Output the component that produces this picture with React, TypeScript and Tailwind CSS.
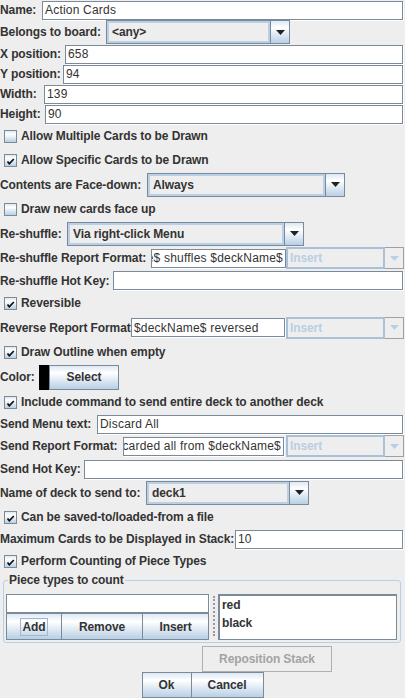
import React from 'react';

// Metal/Ocean look: shared button gradient + border colours
const grad = 'bg-[linear-gradient(to_bottom,#dde8f3_0%,#ffffff_30%,#b8cfe5_100%)]';

function Label({ text, w }: { text: string; w: string }) {
  return <span className={`shrink-0 whitespace-nowrap font-bold ${w}`}>{text}</span>;
}

function Field({ value = '', end = false, className = '' }: { value?: string; end?: boolean; className?: string }) {
  return (
    <div
      className={`h-[19px] min-w-0 bg-white border border-[#7a8a99] shadow-[1px_1px_0_#ffffff] flex items-center overflow-hidden px-[2px] tracking-[0.2px] ${end ? 'justify-end' : ''} ${className}`}
    >
      <span className="whitespace-nowrap">{value}</span>
    </div>
  );
}

function Arrow({ color }: { color: string }) {
  return (
    <svg width="9" height="5" viewBox="0 0 9 5">
      <path d="M0 0 H9 L4.5 5 Z" fill={color} />
    </svg>
  );
}

function Combo({ value, className = '' }: { value: string; className?: string }) {
  return (
    <div className={`h-[24px] shrink-0 flex border border-[#7a8a99] ${className}`}>
      <div className="flex-1 flex items-center pl-[3px] bg-[#eeeeee] border-2 border-[#b8cfe5] font-bold">{value}</div>
      <div className={`w-[19px] flex items-center justify-center border-l border-[#7a8a99] ${grad}`}>
        <Arrow color="#222222" />
      </div>
    </div>
  );
}

function DisabledCombo() {
  return (
    <div className="h-[22px] w-[118px] mr-[1px] shrink-0 flex">
      <div className="flex-1 flex items-center pl-[2px] border-2 border-[#a9c0d8] text-[#b8cfe5] font-bold">Insert</div>
      <div className="w-[19px] flex items-center justify-center border border-l-0 border-[#a0a0a0]">
        <Arrow color="#b8cfe5" />
      </div>
    </div>
  );
}

function Check({ checked = false, label }: { checked?: boolean; label: string }) {
  return (
    <div className="h-[24px] flex items-center pl-[4px] gap-[4px]">
      <div className={`w-[13px] h-[13px] border border-[#7a8a99] flex items-center justify-center ${grad}`}>
        {checked && (
          <svg width="9" height="9" viewBox="0 0 9 9">
            <path d="M1.5 5.5 L3.3 7.8 L7.8 3" stroke="#111111" strokeWidth="1.7" fill="none" />
          </svg>
        )}
      </div>
      <span className="font-bold whitespace-nowrap">{label}</span>
    </div>
  );
}

function Button({ text, className = '', focus = false }: { text: string; className?: string; focus?: boolean }) {
  return (
    <div className={`flex items-center justify-center border border-[#7a8a99] font-bold ${grad} ${className}`}>
      {focus ? <span className="border border-[#a3b8cc] px-[1px] leading-[16px]">{text}</span> : text}
    </div>
  );
}

export default function App() {
  return (
    <div className="w-[405px] h-[698px] overflow-hidden bg-[#eeeeee] text-[#333333] text-[12px] leading-[14px] tracking-[-0.1px] font-['Liberation_Sans',Arial,sans-serif] flex flex-col">
      <div className="h-[20px] flex items-center pr-[2px]">
        <Label text="Name:" w="w-[42px]" />
        <Field value="Action Cards" className="flex-1" />
      </div>
      <div className="h-[24px] flex items-center">
        <Label text="Belongs to board:" w="w-[106px]" />
        <Combo value="<any>" className="w-[184px]" />
      </div>
      <div className="h-[20px] flex items-center pr-[2px]">
        <Label text="X position:" w="w-[65px]" />
        <Field value="658" className="flex-1" />
      </div>
      <div className="h-[20px] flex items-center pr-[2px]">
        <Label text="Y position:" w="w-[63px]" />
        <Field value="94" className="flex-1" />
      </div>
      <div className="h-[20px] flex items-center pr-[2px]">
        <Label text="Width:" w="w-[44px]" />
        <Field value="139" className="flex-1" />
      </div>
      <div className="h-[20px] flex items-center pr-[2px]">
        <Label text="Height:" w="w-[45px]" />
        <Field value="90" className="flex-1" />
      </div>

      <Check label="Allow Multiple Cards to be Drawn" />
      <Check checked label="Allow Specific Cards to be Drawn" />

      <div className="h-[25px] flex items-center">
        <Label text="Contents are Face-down:" w="w-[147px]" />
        <Combo value="Always" className="w-[198px]" />
      </div>

      <Check label="Draw new cards face up" />

      <div className="h-[25px] flex items-center">
        <Label text="Re-shuffle:" w="w-[67px]" />
        <Combo value="Via right-click Menu" className="w-[237px]" />
      </div>
      <div className="h-[24px] flex items-center">
        <Label text="Re-shuffle Report Format:" w="w-[151px]" />
        <Field value="$playerSide$ shuffles $deckName$" end className="flex-1" />
        <DisabledCombo />
      </div>
      <div className="h-[21px] flex items-center pr-[2px]">
        <Label text="Re-shuffle Hot Key:" w="w-[113px]" />
        <Field className="flex-1" />
      </div>

      <Check checked label="Reversible" />

      <div className="h-[25px] flex items-center">
        <Label text="Reverse Report Format" w="w-[131px]" />
        <Field value="$deckName$ reversed" className="flex-1 mr-[1px]" />
        <DisabledCombo />
      </div>

      <Check checked label="Draw Outline when empty" />

      <div className="h-[26px] flex items-center">
        <Label text="Color:" w="w-[39px]" />
        <div className="w-[10px] h-[25px] bg-black" />
        <Button text="Select" className="w-[70px] h-[25px]" />
      </div>

      <Check checked label="Include command to send entire deck to another deck" />

      <div className="h-[20px] flex items-center pr-[2px]">
        <Label text="Send Menu text:" w="w-[97px]" />
        <Field value="Discard All" className="flex-1" />
      </div>
      <div className="h-[24px] flex items-center">
        <Label text="Send Report Format:" w="w-[123px]" />
        <Field value="$playerSide$ discarded all from $deckName$" end className="flex-1 mr-[2px]" />
        <DisabledCombo />
      </div>
      <div className="h-[22px] flex items-center pr-[2px]">
        <Label text="Send Hot Key:" w="w-[84px]" />
        <Field className="flex-1" />
      </div>
      <div className="h-[25px] flex items-center">
        <Label text="Name of deck to send to:" w="w-[146px]" />
        <Combo value="deck1" className="w-[163px]" />
      </div>

      <Check checked label="Can be saved-to/loaded-from a file" />

      <div className="h-[20px] flex items-center pr-[2px]">
        <Label text="Maximum Cards to be Displayed in Stack:" w="w-[235px]" />
        <Field value="10" className="flex-1" />
      </div>

      <Check checked label="Perform Counting of Piece Types" />

      <fieldset className="ml-[3px] mr-[4px] border border-[#b8cfe5] rounded-[3px] pl-[2px] pr-[3px] pt-[7px] pb-[2px]">
        <legend className="ml-[2px] px-[1px] font-bold leading-[14px]">Piece types to count</legend>
        <div className="flex h-[46px]">
          <div className="w-[203px] flex flex-col">
            <Field className="w-full" />
            <div className="flex h-[27px]">
              <Button text="Add" focus className="w-[56px]" />
              <Button text="Remove" className="w-[81px] border-l-0" />
              <Button text="Insert" className="w-[66px] border-l-0" />
            </div>
          </div>
          <div className="w-[9px] flex justify-center pt-[2px] pb-[4px]">
            <div className="w-0 h-full border-l-2 border-dotted border-[#9a9a9a]" />
          </div>
          <div className="flex-1 bg-white border border-[#7a8a99] border-l-2 border-t-2 pl-[2px] font-bold leading-[18px]">
            <div>red</div>
            <div>black</div>
          </div>
        </div>
      </fieldset>

      <div className="mt-[3px] pl-[202px]">
        <div className="w-[130px] h-[26px] flex items-center justify-center border border-[#b0b0b0] text-[#a3a3a3] font-bold">
          Reposition Stack
        </div>
      </div>

      <div className="flex justify-center h-[26px]">
        <Button text="Ok" className="w-[50px]" />
        <Button text="Cancel" className="w-[72px] border-l-0" />
      </div>
    </div>
  );
}
